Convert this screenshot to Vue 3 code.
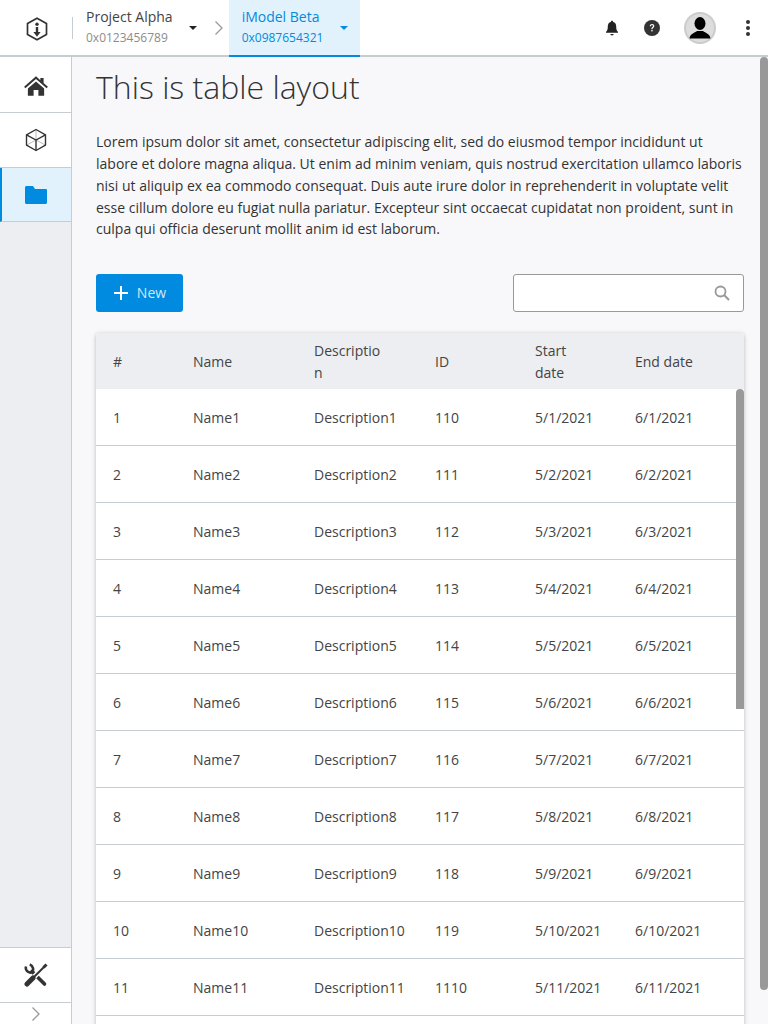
<template>
  <div class="page">
    <header class="topbar">
      <div class="logo-cell">
        <svg class="logo" viewBox="0 0 24 24" width="24" height="24">
          <path d="M12 1.200 21.500 6.600v10.800L12 22.800l-9.500-5.400V6.600z" fill="none" stroke="#333" stroke-width="1.700" stroke-linejoin="round" />
          <circle cx="12" cy="7.300" r="1.700" fill="#333" />
          <path d="M10.800 10h2.400v5h2.400L12 19.800 8.400 15h2.400z" fill="#333" />
        </svg>
      </div>
      <div class="crumb">
        <div class="crumb-text">
          <span class="crumb-title">Project Alpha</span>
          <span class="crumb-sub">0x0123456789</span>
        </div>
        <span class="caret"></span>
      </div>
      <svg class="crumb-sep" viewBox="0 0 10 16" width="10" height="16">
        <path d="M1.500 1.500 8 8l-6.500 6.500" fill="none" stroke="#999" stroke-width="1.300" />
      </svg>
      <div class="crumb active">
        <div class="crumb-text">
          <span class="crumb-title">iModel Beta</span>
          <span class="crumb-sub">0x0987654321</span>
        </div>
        <span class="caret"></span>
      </div>
      <div class="top-actions">
        <svg viewBox="0 0 16 16" width="16" height="16">
          <path d="M8 .8c.7 0 1.100.5 1.100 1.100 2.200.5 3.100 2.200 3.100 4.500 0 3 .6 4.300 1.800 5.600v.8H2v-.8c1.200-1.300 1.800-2.600 1.800-5.600 0-2.300.9-4 3.100-4.500C6.900 1.300 7.300.8 8 .8z" fill="#222" />
          <path d="M6.300 14h3.400c0 .9-.8 1.400-1.700 1.400S6.300 14.900 6.300 14z" fill="#222" />
        </svg>
        <svg viewBox="0 0 16 16" width="16" height="16">
          <circle cx="8" cy="8" r="8" fill="#333" />
          <path d="M5.800 6.200C5.900 4.800 6.800 4 8.100 4c1.300 0 2.200.8 2.200 1.900 0 1.800-1.800 1.700-1.800 3.300H7.300c0-2.200 1.700-2.200 1.700-3.300 0-.5-.4-.8-.9-.8-.6 0-1 .4-1.100 1.100z" fill="#fff" />
          <rect x="7.300" y="10" width="1.300" height="1.400" fill="#fff" />
        </svg>
        <div class="avatar">
          <svg viewBox="0 0 32 32" width="32" height="32">
            <circle cx="16" cy="16" r="15" fill="#ddd" stroke="#ccc" stroke-width="2" />
            <ellipse cx="16" cy="11.500" rx="5.500" ry="6.500" fill="#000" />
            <path d="M5.500 26.500c.6-5 5-5.500 7.500-7.500h6c2.500 2 6.900 2.500 7.500 7.500z" fill="#000" />
          </svg>
        </div>
        <svg viewBox="0 0 6 18" width="6" height="18">
          <circle cx="3" cy="3" r="2" fill="#333" />
          <circle cx="3" cy="9" r="2" fill="#333" />
          <circle cx="3" cy="15" r="2" fill="#333" />
        </svg>
      </div>
    </header>

    <div class="body">
      <aside class="sidebar">
        <div class="side-item home">
          <svg viewBox="0 0 24 24" width="26" height="26">
            <path d="M12 3 1 12.800l1.200 1.300L12 5.600l9.800 8.500 1.200-1.300-4-3.500V4.500h-3v2.200z" fill="#333" />
            <path d="M4.500 14.400 12 7.800l7.500 6.600V21h-5.300v-5.200H9.800V21H4.500z" fill="#333" />
          </svg>
        </div>
        <div class="side-item">
          <svg viewBox="0 0 24 24" width="24" height="24">
            <path d="M12 1.500V12M12 12 2.500 17.200M12 12l9.500 5.200" fill="none" stroke="#bbb" stroke-width="1" />
            <path d="M12 1.500 21.500 6.800v10.400L12 22.500 2.500 17.200V6.800z" fill="none" stroke="#333" stroke-width="1.400" stroke-linejoin="round" />
            <path d="M2.500 6.800 12 12l9.500-5.200M12 12v10.500" fill="none" stroke="#333" stroke-width="1.400" />
          </svg>
        </div>
        <div class="side-item current">
          <svg viewBox="0 0 24 24" width="24" height="24">
            <path d="M1 4.500C1 3.700 1.700 3 2.500 3H9l2 3h10.800c.7 0 1.200.5 1.200 1.200v12.300c0 .8-.7 1.500-1.500 1.500h-19C1.700 21 1 20.300 1 19.500z" fill="#008be1" />
          </svg>
        </div>
        <div class="side-fill"></div>
        <div class="side-item tools">
          <svg viewBox="0 0 24 24" width="24" height="24">
            <path d="M2 3.500C1 7 4 10.500 8 9.300 9.800 7.500 9.600 3 5.800 1.400" fill="none" stroke="#333" stroke-width="2.600" />
            <path d="M8 8.500 20.500 21" stroke="#333" stroke-width="3.600" stroke-linecap="round" />
            <path d="M3.500 20.500 20 4" stroke="#fff" stroke-width="5" />
            <path d="M9 15 20 4" stroke="#333" stroke-width="2" />
            <path d="M3 21 9 15" stroke="#333" stroke-width="5" stroke-linecap="round" />
            <path d="M19.500 4.500 22.500 1.500" stroke="#333" stroke-width="3" />
          </svg>
        </div>
        <div class="side-expand">
          <svg viewBox="0 0 10 16" width="10" height="16">
            <path d="M1.500 1.500 8 8l-6.500 6.500" fill="none" stroke="#999" stroke-width="1.300" />
          </svg>
        </div>
      </aside>

      <main class="content">
        <h1 class="title">This is table layout</h1>
        <p class="lorem">
          Lorem ipsum dolor sit amet, consectetur adipiscing elit, sed do eiusmod tempor incididunt ut labore et dolore magna aliqua. Ut enim ad minim veniam, quis nostrud exercitation ullamco laboris nisi ut aliquip ex ea commodo consequat. Duis aute irure dolor in reprehenderit in voluptate velit esse cillum dolore eu fugiat nulla pariatur. Excepteur sint occaecat cupidatat non proident, sunt in culpa qui officia deserunt mollit anim id est laborum.
        </p>
        <div class="toolbar">
          <button class="new-btn">
            <svg viewBox="0 0 16 16" width="16" height="16">
              <path d="M7 1h2v6h6v2H9v6H7V9H1V7h6z" fill="#fff" />
            </svg>
            <span>New</span>
          </button>
          <div class="search">
            <svg viewBox="0 0 16 16" width="16" height="16">
              <circle cx="6.500" cy="6.500" r="5" fill="none" stroke="#999" stroke-width="1.800" />
              <path d="M10.300 10.300 15 15" stroke="#999" stroke-width="2" />
            </svg>
          </div>
        </div>
        <div class="table-wrap">
          <table>
            <thead>
              <tr>
                <th class="c-num">#</th>
                <th class="c-name">Name</th>
                <th class="c-desc">Description</th>
                <th class="c-id">ID</th>
                <th class="c-start">Start date</th>
                <th>End date</th>
              </tr>
            </thead>
            <tbody>
              <tr v-for="row in rows" :key="row.num">
                <td>{{ row.num }}</td>
                <td>Name{{ row.num }}</td>
                <td>Description{{ row.num }}</td>
                <td>11{{ row.idSuffix }}</td>
                <td>5/{{ row.num }}/2021</td>
                <td>6/{{ row.num }}/2021</td>
              </tr>
            </tbody>
          </table>
          <div class="table-thumb"></div>
        </div>
        <div class="page-thumb"></div>
      </main>
    </div>
  </div>
</template>

<script setup>
const rows = Array.from({ length: 11 }, (_, i) => ({
  num: i + 1,
  idSuffix: i,
}))
</script>

<style>
html, body {
  margin: 0;
  overflow: hidden;
}
</style>

<style scoped>
.page {
  width: 768px;
  height: 1024px;
  display: flex;
  flex-direction: column;
  overflow: hidden;
  font-family: "Open Sans", "Liberation Sans", sans-serif;
  font-size: 14px;
  color: #333;
  background: #f8f8fb;
}
.topbar {
  height: 55px;
  flex: none;
  display: flex;
  align-items: flex-start;
  background: #fff;
  border-bottom: 2px solid #c7ccd1;
}
.logo-cell {
  width: 73px;
  height: 55px;
  display: flex;
  align-items: center;
  justify-content: center;
  position: relative;
}
.logo-cell::after {
  content: "";
  position: absolute;
  right: 0;
  top: 17px;
  height: 22px;
  width: 1px;
  background: #c7ccd1;
}
.logo {
  margin-top: 2px;
}
.crumb {
  display: flex;
  align-items: center;
  padding: 0 13px;
  height: 55px;
}
.crumb-text {
  display: flex;
  flex-direction: column;
  margin-right: 16px;
}
.crumb-title {
  font-size: 14px;
  line-height: 20px;
  color: #444;
}
.crumb-sub {
  font-size: 12px;
  line-height: 21px;
  color: #8c8c8c;
}
.caret {
  width: 0;
  height: 0;
  border-left: 4px solid transparent;
  border-right: 4px solid transparent;
  border-top: 4px solid #222;
}
.crumb-sep {
  margin: 20px 5px 0 4px;
}
.crumb.active {
  height: 57px;
  background: #e2f2fc;
  border-bottom: 2px solid #008be1;
  box-sizing: border-box;
  padding: 0 12px 0 13px;
}
.crumb.active .crumb-text {
  margin-right: 17px;
}
.crumb.active .crumb-title,
.crumb.active .crumb-sub {
  color: #008be1;
}
.crumb.active .caret {
  border-top-color: #008be1;
}
.top-actions {
  margin-left: auto;
  height: 55px;
  display: flex;
  align-items: center;
  gap: 24px;
  padding-right: 17px;
}
.avatar {
  width: 32px;
  height: 32px;
  margin-right: 5px;
}
.body {
  flex: 1;
  display: flex;
  min-height: 0;
}
.sidebar {
  width: 71px;
  flex: none;
  display: flex;
  flex-direction: column;
  background: #eceef2;
  border-right: 1px solid #c7ccd1;
}
.side-item {
  height: 55px;
  flex: none;
  display: flex;
  align-items: center;
  justify-content: center;
  background: #fff;
  border-bottom: 1px solid #c7ccd1;
  box-sizing: border-box;
}
.side-item.home {
  height: 56px;
  padding-top: 2px;
}
.side-item.current {
  height: 54px;
  background: #e2f2fc;
  border-left: 2px solid #008be1;
  padding-right: 2px;
}
.side-fill {
  flex: 1;
}
.side-item.tools {
  height: 56px;
  border-top: 1px solid #c7ccd1;
}
.side-expand {
  height: 21px;
  flex: none;
  display: flex;
  align-items: center;
  justify-content: center;
  background: #fff;
}
.content {
  flex: 1;
  min-width: 0;
  padding: 0 24px;
  position: relative;
  overflow: hidden;
}
.title {
  margin: 7px 0 0;
  font-size: 32px;
  line-height: 46px;
  font-weight: 300;
  color: #333;
}
.lorem {
  margin: 21.2px 0 0;
  font-size: 14px;
  line-height: 21.8px;
  color: #333;
}
.toolbar {
  margin-top: 33.8px;
  display: flex;
  justify-content: space-between;
  align-items: center;
}
.new-btn {
  height: 38px;
  width: 87px;
  display: flex;
  align-items: center;
  justify-content: center;
  gap: 8px;
  border: none;
  border-radius: 3px;
  background: #008be1;
  color: #cfe8f8;
  font-family: inherit;
  font-size: 14px;
  padding: 0;
}
.search {
  width: 231px;
  height: 38px;
  box-sizing: border-box;
  background: #fff;
  border: 1px solid #999;
  border-radius: 3px;
  display: flex;
  align-items: center;
  justify-content: flex-end;
  padding-right: 13px;
}
.table-wrap {
  margin-top: 21px;
  min-height: 760px;
  position: relative;
  background: #fff;
  box-shadow: 0 1px 4px rgba(0, 0, 0, 0.25);
  border-radius: 3px;
}
table {
  width: 100%;
  table-layout: fixed;
  border-collapse: separate;
  border-spacing: 0;
}
th {
  height: 56px;
  padding: 2px 16px 0;
  box-sizing: border-box;
  background: #eceef2;
  font-weight: 400;
  text-align: left;
  line-height: 22px;
  color: #444;
}
.c-num { width: 81px; padding-left: 17px; }
.c-name { width: 121px; }
.c-desc { width: 121px; padding-right: 37px; word-break: break-all; }
.c-id { width: 100px; }
.c-start { width: 100px; padding-right: 30px; }
td {
  height: 57px;
  padding: 1px 16px 0;
  box-sizing: border-box;
  border-bottom: 1px solid #c7ccd1;
  color: #444;
}
td:first-child {
  padding-left: 17px;
}
.table-thumb {
  position: absolute;
  right: 0;
  top: 56px;
  width: 8px;
  height: 320px;
  border-radius: 4px 4px 0 0;
  background: #999;
}
.page-thumb {
  position: absolute;
  right: 0;
  top: 0;
  width: 8px;
  height: 933px;
  border-radius: 4px;
  background: #999;
}
</style>
